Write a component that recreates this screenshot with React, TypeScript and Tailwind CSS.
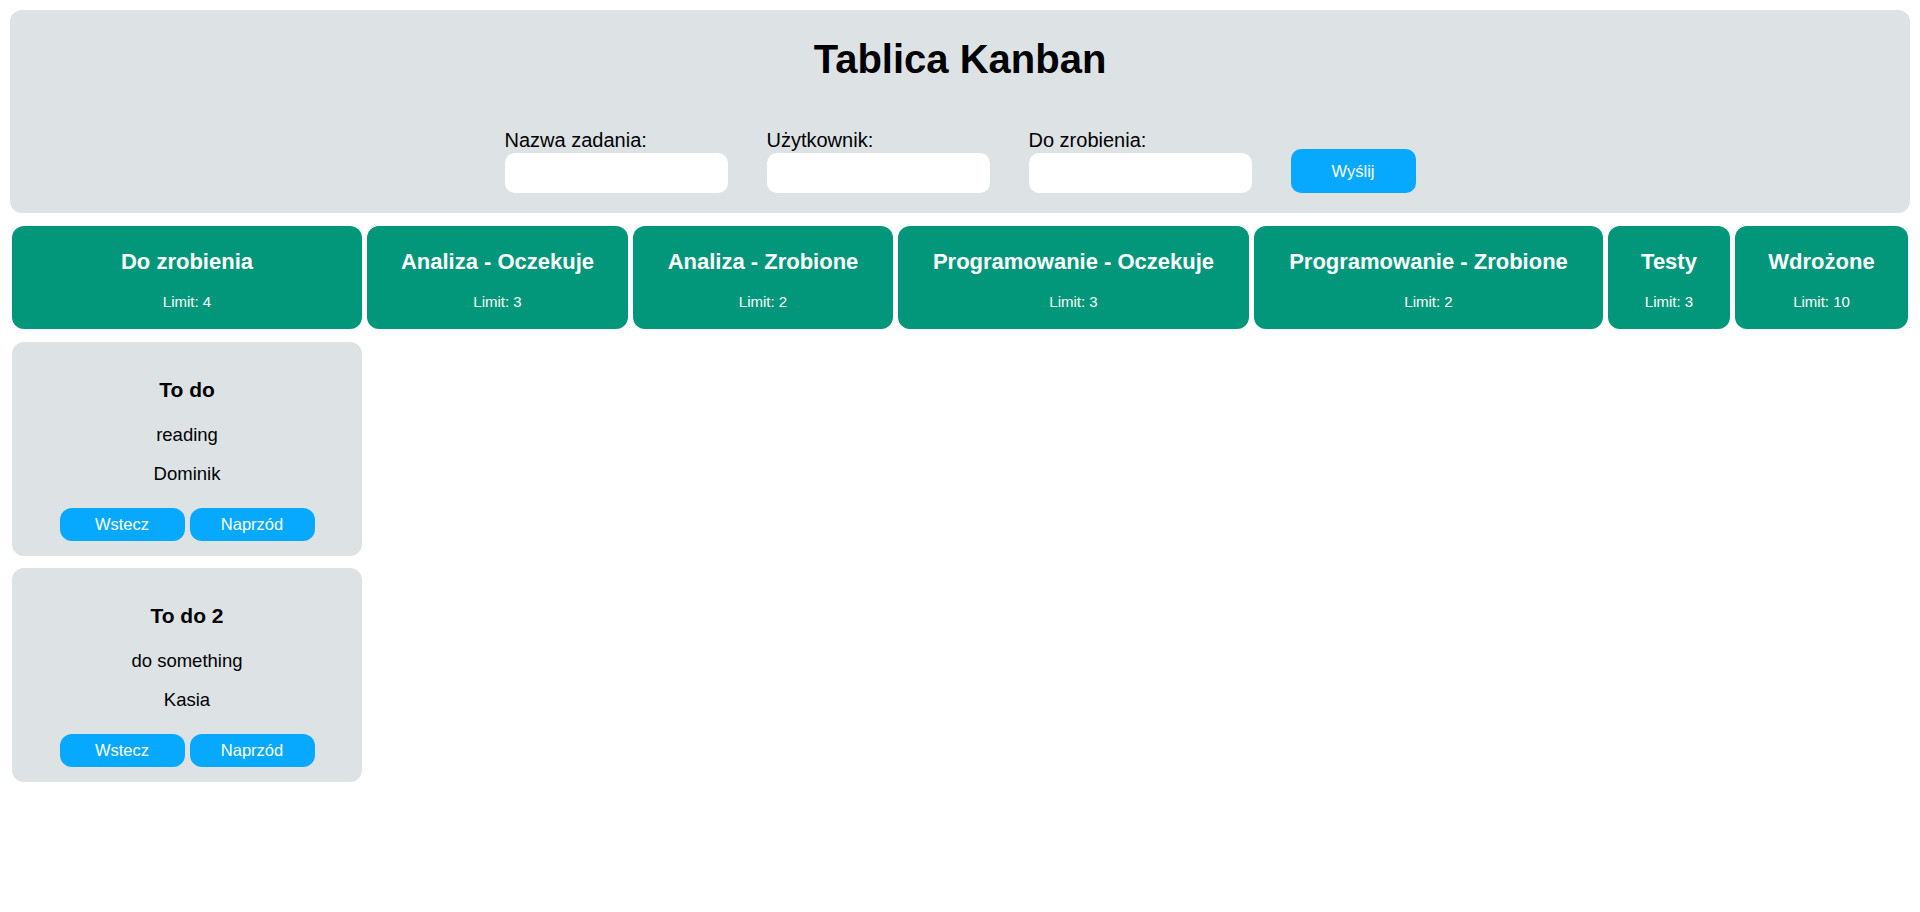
import React from "react";

interface Task {
  title: string;
  description: string;
  user: string;
}

interface Column {
  name: string;
  limit: number;
  width: string;
  tasks: Task[];
}

const columns: Column[] = [
  {
    name: "Do zrobienia",
    limit: 4,
    width: "w-[350px]",
    tasks: [
      { title: "To do", description: "reading", user: "Dominik" },
      { title: "To do 2", description: "do something", user: "Kasia" },
    ],
  },
  { name: "Analiza - Oczekuje", limit: 3, width: "w-[261px]", tasks: [] },
  { name: "Analiza - Zrobione", limit: 2, width: "w-[260px]", tasks: [] },
  { name: "Programowanie - Oczekuje", limit: 3, width: "w-[351px]", tasks: [] },
  { name: "Programowanie - Zrobione", limit: 2, width: "w-[349px]", tasks: [] },
  { name: "Testy", limit: 3, width: "w-[122px]", tasks: [] },
  { name: "Wdrożone", limit: 10, width: "w-[173px]", tasks: [] },
];

const FormField: React.FC<{ label: string }> = ({ label }) => (
  <div className="flex flex-col">
    <label className="text-[20px] leading-[23px] text-black">{label}</label>
    <input
      type="text"
      className="mt-[1px] h-[40px] w-[223px] rounded-[10px] bg-white px-2 outline-none"
    />
  </div>
);

const TaskCard: React.FC<{ task: Task }> = ({ task }) => (
  <div className="flex flex-col items-center rounded-[12px] bg-[#dde3e5] pt-[36px] pb-[15px]">
    <h4 className="text-[21px] font-bold leading-[24px] text-black">{task.title}</h4>
    <p className="mt-[22px] text-[18.5px] leading-[22px] text-black">{task.description}</p>
    <p className="mt-[17px] text-[18.5px] leading-[22px] text-black">{task.user}</p>
    <div className="mt-[23px] flex gap-[5px]">
      <button className="h-[33px] w-[125px] rounded-[12px] bg-[#06a9fe] text-[16.5px] text-white">
        Wstecz
      </button>
      <button className="h-[33px] w-[125px] rounded-[12px] bg-[#06a9fe] text-[16.5px] text-white">
        Naprzód
      </button>
    </div>
  </div>
);

export default function App() {
  return (
    <div className="min-h-screen bg-white p-[10px] font-['Liberation_Sans',Arial,sans-serif]">
      <header className="flex flex-col items-center rounded-[12px] bg-[#dde3e5] pt-[26px] pb-[20px]">
        <h1 className="text-[40px] font-bold leading-[46px] text-black">Tablica Kanban</h1>
        <form
          className="mt-[47px] flex items-end gap-[39px]"
          onSubmit={(e) => e.preventDefault()}
        >
          <FormField label="Nazwa zadania:" />
          <FormField label="Użytkownik:" />
          <FormField label="Do zrobienia:" />
          <button
            type="submit"
            className="h-[44px] w-[125px] rounded-[10px] bg-[#06a9fe] text-[16.5px] text-white"
          >
            Wyślij
          </button>
        </form>
      </header>

      <div className="mt-[13px] flex items-start gap-[5px] px-[2px]">
        {columns.map((col) => (
          <div key={col.name} className={`flex flex-col ${col.width}`}>
            <div className="flex flex-col items-center rounded-[12px] bg-[#02977a] pt-[22px] pb-[18px] text-white">
              <h3 className="text-[22px] font-bold leading-[27px] whitespace-nowrap">{col.name}</h3>
              <span className="mt-[18px] text-[15px] leading-[18px]">Limit: {col.limit}</span>
            </div>
            {col.tasks.length > 0 && (
              <div className="mt-[13px] flex flex-col gap-[12px]">
                {col.tasks.map((t) => (
                  <TaskCard key={t.title} task={t} />
                ))}
              </div>
            )}
          </div>
        ))}
      </div>
    </div>
  );
}
